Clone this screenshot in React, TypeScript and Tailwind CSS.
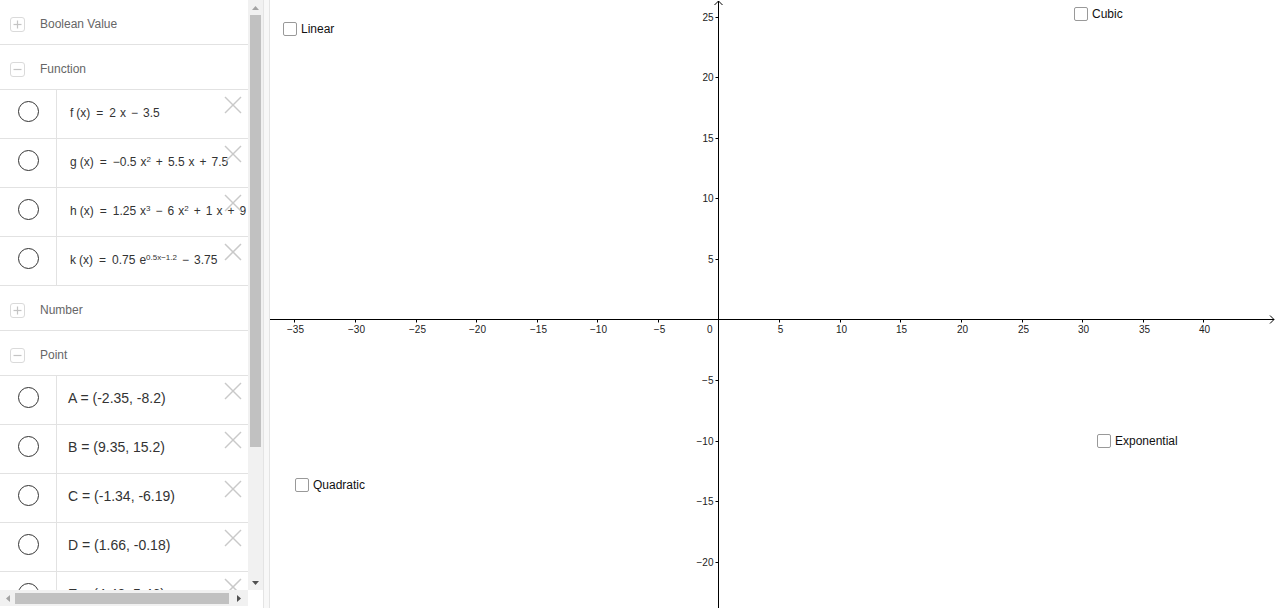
import type { ReactNode } from 'react';

const S = 12.12;
const OX = 448.5;
const OY = 319.5;

function Op({ children, wide }: { children: ReactNode; wide?: boolean }) {
  return <span className={wide ? 'mx-[6px]' : 'mx-[5px]'}>{children}</span>;
}

function GroupHeader({ label, open }: { label: string; open: boolean }) {
  return (
    <div className="h-[45px] pt-[4px] flex items-center border-b border-[#e2e2e2] shrink-0">
      <div className="ml-[10px] w-[15px] h-[15px] border border-[#dadada] rounded-[3px] flex items-center justify-center">
        <svg width="9" height="9" viewBox="0 0 9 9">
          <line x1="0.5" y1="4.5" x2="8.5" y2="4.5" stroke="#c4c4c4" strokeWidth="1.2" />
          {!open && <line x1="4.5" y1="0.5" x2="4.5" y2="8.5" stroke="#c4c4c4" strokeWidth="1.2" />}
        </svg>
      </div>
      <span className="ml-[15px] text-[12px] text-[#666]">{label}</span>
    </div>
  );
}

function ItemRow({ children, big }: { children: ReactNode; big?: boolean }) {
  return (
    <div className="h-[49px] flex border-b border-[#e2e2e2] relative shrink-0">
      <div className="w-[57px] border-r border-[#e2e2e2] flex justify-center pt-[11px] shrink-0">
        <div className="w-[21px] h-[21px] rounded-full border-[1.5px] border-[#333]" />
      </div>
      <div
        className={`whitespace-nowrap text-[#333] ${big ? 'pl-[11px] text-[14px] pt-[12px]' : 'pl-[13px] text-[12px] pt-[14px]'}`}
      >
        {children}
      </div>
      <svg className="absolute left-[224px] top-[6px]" width="18" height="18" viewBox="0 0 18 18">
        <line x1="1" y1="1" x2="17" y2="17" stroke="#c9c9c9" strokeWidth="1.5" />
        <line x1="17" y1="1" x2="1" y2="17" stroke="#c9c9c9" strokeWidth="1.5" />
      </svg>
    </div>
  );
}

function Check({ label, className }: { label: string; className: string }) {
  return (
    <div className={`absolute flex items-center gap-[4px] ${className}`}>
      <div className="w-[14px] h-[14px] rounded-[2px] border-[1.5px] border-[#999] bg-white" />
      <span className="text-[12px] text-[#111] leading-none">{label}</span>
    </div>
  );
}

function Axes() {
  const xs = [-35, -30, -25, -20, -15, -10, -5, 5, 10, 15, 20, 25, 30, 35, 40];
  const ys = [-20, -15, -10, -5, 5, 10, 15, 20, 25];
  return (
    <svg width="1006" height="608" className="absolute inset-0">
      <line x1="0" y1={OY} x2="1004" y2={OY} stroke="#000" strokeWidth="1" />
      <polyline points={`1000,${OY - 4} 1004,${OY} 1000,${OY + 4}`} fill="none" stroke="#000" strokeWidth="1" />
      <line x1={OX} y1="1" x2={OX} y2="608" stroke="#000" strokeWidth="1" />
      <polyline points={`${OX - 4},5 ${OX},1 ${OX + 4},5`} fill="none" stroke="#000" strokeWidth="1" />
      {xs.map((v) => {
        const x = Math.round(OX + v * S) + 0.5;
        return (
          <g key={`x${v}`}>
            <line x1={x} y1={OY} x2={x} y2={OY + 3} stroke="#000" strokeWidth="1" />
            <text x={x + 1} y={OY + 13} textAnchor="middle" fontSize="10" fill="#222" fontFamily="'Liberation Sans', Arial, sans-serif">
              {v < 0 ? `\u2212${-v}` : v}
            </text>
          </g>
        );
      })}
      {ys.map((v) => {
        const y = Math.round(OY - v * S) + 0.5;
        return (
          <g key={`y${v}`}>
            <line x1={OX - 3} y1={y} x2={OX} y2={y} stroke="#000" strokeWidth="1" />
            <text x={OX - 5} y={y + 3.5} textAnchor="end" fontSize="10" fill="#222" fontFamily="'Liberation Sans', Arial, sans-serif">
              {v < 0 ? `\u2212${-v}` : v}
            </text>
          </g>
        );
      })}
      <text x={OX - 6} y={OY + 13} textAnchor="end" fontSize="10" fill="#222" fontFamily="'Liberation Sans', Arial, sans-serif">
        0
      </text>
    </svg>
  );
}

export default function App() {
  return (
    <div className="w-[1276px] h-[608px] flex bg-white overflow-hidden font-['Liberation_Sans',Arial,sans-serif]">
      {/* Algebra view */}
      <div className="w-[263px] flex flex-col shrink-0">
        <div className="flex h-[590px]">
          <div className="w-[248px] overflow-hidden flex flex-col">
            <GroupHeader label="Boolean Value" open={false} />
            <GroupHeader label="Function" open />
            <ItemRow>
              f<span className="ml-[3px]">(x)</span>
              <Op wide>=</Op>2<span className="ml-[4px]">x</span>
              <Op>−</Op>3.5
            </ItemRow>
            <ItemRow>
              g<span className="ml-[3px]">(x)</span>
              <Op wide>=</Op>−0.5<span className="ml-[4px]">x<sup className="text-[8px]">2</sup></span>
              <Op>+</Op>5.5<span className="ml-[4px]">x</span>
              <Op>+</Op>7.5
            </ItemRow>
            <ItemRow>
              h<span className="ml-[3px]">(x)</span>
              <Op wide>=</Op>1.25<span className="ml-[4px]">x<sup className="text-[8px]">3</sup></span>
              <Op>−</Op>6<span className="ml-[4px]">x<sup className="text-[8px]">2</sup></span>
              <Op>+</Op>1<span className="ml-[4px]">x</span>
              <Op>+</Op>9
            </ItemRow>
            <ItemRow>
              k<span className="ml-[3px]">(x)</span>
              <Op wide>=</Op>0.75<span className="ml-[4px]">e<sup className="text-[8px]">0.5x−1.2</sup></span>
              <Op>−</Op>3.75
            </ItemRow>
            <GroupHeader label="Number" open={false} />
            <GroupHeader label="Point" open />
            <ItemRow big>A = (-2.35, -8.2)</ItemRow>
            <ItemRow big>B = (9.35, 15.2)</ItemRow>
            <ItemRow big>C = (-1.34, -6.19)</ItemRow>
            <ItemRow big>D = (1.66, -0.18)</ItemRow>
            <ItemRow big>E = (4.48, 5.46)</ItemRow>
          </div>
          {/* vertical scrollbar */}
          <div className="w-[15px] bg-[#f1f1f1] flex flex-col items-center">
            <div className="h-[15px] flex items-center justify-center">
              <svg width="7" height="4" viewBox="0 0 7 4"><polygon points="0,4 3.5,0 7,4" fill="#a3a3a3" /></svg>
            </div>
            <div className="w-[11px] h-[432px] bg-[#c1c1c1]" />
            <div className="flex-1" />
            <div className="h-[15px] flex items-center justify-center">
              <svg width="7" height="4" viewBox="0 0 7 4"><polygon points="0,0 7,0 3.5,4" fill="#505050" /></svg>
            </div>
          </div>
        </div>
        {/* horizontal scrollbar */}
        <div className="flex h-[16px]">
          <div className="w-[248px] bg-[#f1f1f1] flex items-center">
            <div className="w-[15px] flex items-center justify-center">
              <svg width="4" height="7" viewBox="0 0 4 7"><polygon points="4,0 0,3.5 4,7" fill="#a3a3a3" /></svg>
            </div>
            <div className="w-[214px] h-[11px] bg-[#c1c1c1]" />
            <div className="flex-1 flex items-center justify-center">
              <svg width="4" height="7" viewBox="0 0 4 7"><polygon points="0,0 4,3.5 0,7" fill="#505050" /></svg>
            </div>
          </div>
          <div className="w-[15px] bg-white" />
        </div>
      </div>

      {/* splitter */}
      <div className="w-[7px] shrink-0 bg-[#f8f8f8] border-l border-r border-[#e4e4e4]" />

      {/* Graphics view */}
      <div className="relative flex-1">
        <Axes />
        <Check label="Linear" className="left-[13px] top-[22px]" />
        <Check label="Cubic" className="left-[804px] top-[7px]" />
        <Check label="Exponential" className="left-[827px] top-[434px]" />
        <Check label="Quadratic" className="left-[25px] top-[478px]" />
      </div>
    </div>
  );
}
